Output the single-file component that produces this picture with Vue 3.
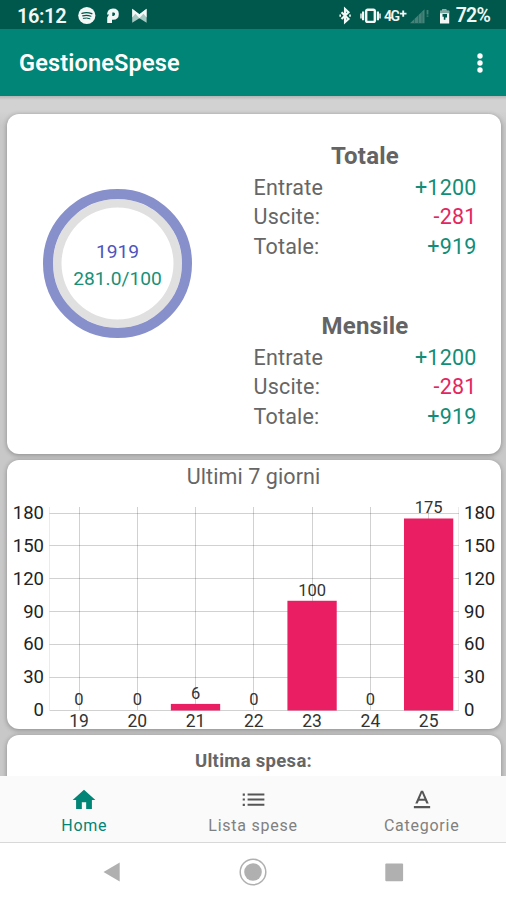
<script setup>
const summaries = [
  { title: 'Totale', rows: [['Entrate', '+1200'], ['Uscite:', '-281'], ['Totale:', '+919']] },
  { title: 'Mensile', rows: [['Entrate', '+1200'], ['Uscite:', '-281'], ['Totale:', '+919']] },
]

const ticks = [180, 150, 120, 90, 60, 30, 0]
const days = [
  { day: 19, value: 0 },
  { day: 20, value: 0 },
  { day: 21, value: 6 },
  { day: 22, value: 0 },
  { day: 23, value: 100 },
  { day: 24, value: 0 },
  { day: 25, value: 175 },
]
const yOf = (v) => 250 - v * 1.0972
const xOf = (i) => 72 + i * 58.28
</script>

<template>
  <div class="screen">
    <header class="status">
      <span class="clock">16:12</span>
      <svg class="notifs" width="69" height="20" viewBox="0 0 69 20">
        <circle cx="8.8" cy="9.5" r="8.600" fill="#f3f7f6" />
        <g fill="none" stroke="#00574b" stroke-linecap="round">
          <path d="M4 7.300q5-1.500 9.800.4" stroke-width="1.400" />
          <path d="M4.700 9.900q4.300-1.200 8.200.4" stroke-width="1.100" />
          <path d="M5.300 12.300q3.500-.8 6.600.4" stroke-width="1" />
        </g>
        <path d="M29 8.500Q29.500 2.500 35 2.500Q40.800 2.500 40.800 8Q40.800 13.800 35 13.800H34V17H29.200V11.500L31 8.500z" fill="#f3f7f6" />
        <path d="M34.300 6.400h1.400q1.500 0 1.400 1.600t-1.600 1.900h-1.200z" fill="#00574b" />
        <path d="M54.200 2.700l7.200 5.600 7.200-5.600v14l-7.200-4.400-7.200 4.400z" fill="#a3c9c2" />
        <path d="M54.200 2.700l7.200 5.600 7.200-5.600v8.800l-3.200-3.700-4 4.500-4-4.500-3.200 3.700z" fill="#f3f7f6" />
      </svg>
      <span class="spacer"></span>
      <svg class="radios" width="116" height="20" viewBox="0 0 116 20">
        <path d="M3.500 6.200l7 6.700-3.500 3.200V3l3.500 3.200-7 6.700M1.400 9.600h1.600M11.200 9.600h1.600" fill="none" stroke="#f3f7f6" stroke-width="2.100" />
        <rect x="28.200" y="3.700" width="8.600" height="12.200" rx="1.400" fill="none" stroke="#f3f7f6" stroke-width="2.400" />
        <path d="M25.100 5.600v8.600M39.900 5.600v8.600" stroke="#f3f7f6" stroke-width="2.200" />
        <path d="M23 7.400v5M42 7.400v5" stroke="#b7d0cc" stroke-width="1.900" />
        <text x="46" y="14.700" class="net" textLength="16">4G</text>
        <path d="M62 7.600h6.500M65.200 4.400v6.400" stroke="#f3f7f6" stroke-width="1.900" />
        <path d="M72 17.300L86.500 3.300v14z" fill="#478279" />
        <path d="M76.500 13v5M80.500 9v9M84 6v12" stroke="#18665b" stroke-width=".7" />
        <path d="M89.500 4v4.500M89.500 9.500v1.200" stroke="#478279" stroke-width="1.800" />
        <path d="M102 4.800h2.300V3.200h4v1.600h2.900v12.800h-9.200z" fill="#f3f7f6" />
        <path d="M102 4.800h2.300V3.200h4v1.600h2.900v2.400h-9.200z" fill="#81a9a2" />
        <path d="M104.500 8h4.500v3.600h-1.600v2.200h-1.600v-3h-1.300z" fill="#00574b" />
      </svg>
      <span class="battery">72%</span>
    </header>

    <div class="appbar">
      <h1>GestioneSpese</h1>
      <svg width="10" height="24" viewBox="0 0 10 24" fill="#fff">
        <circle cx="5" cy="5" r="2.700" /><circle cx="5" cy="12" r="2.700" /><circle cx="5" cy="19" r="2.700" />
      </svg>
    </div>

    <main>
      <section class="card overview">
        <div class="gauge">
          <div class="dial">
            <span class="total">1919</span>
            <span class="ratio">281.0/100</span>
          </div>
        </div>
        <div class="sums">
          <div v-for="s in summaries" :key="s.title" class="sum">
            <h2>{{ s.title }}</h2>
            <div v-for="[label, amount] in s.rows" :key="label" class="row">
              <span>{{ label }}</span>
              <span :class="amount.startsWith('-') ? 'neg' : 'pos'">{{ amount }}</span>
            </div>
          </div>
        </div>
      </section>

      <section class="card week">
        <h3>Ultimi 7 giorni</h3>
        <svg class="chart" width="494" height="236" viewBox="0 32 494 236">
          <g stroke="#000" stroke-opacity=".18" stroke-width="1">
            <path v-for="t in ticks" :key="t" :d="`M42.5 ${Math.round(yOf(t)) + 0.5}H452`" />
            <path v-for="(d, i) in days" :key="d.day" :d="`M${Math.floor(xOf(i)) + 0.5} 47V250`" />
            <path d="M42.5 47V250M451.5 47V250" stroke-opacity=".08" />
          </g>
          <g v-for="t in ticks" :key="t" class="tick">
            <text x="37" :y="yOf(t) + 6.3" text-anchor="end">{{ t }}</text>
            <text x="457" :y="yOf(t) + 6.3">{{ t }}</text>
          </g>
          <g v-for="(d, i) in days" :key="d.day" text-anchor="middle">
            <rect v-if="d.value" :x="xOf(i) - 24.7" :y="yOf(d.value) + 0.5" width="49.3" :height="250 - yOf(d.value)" fill="#e91e63" />
            <text class="value" :x="xOf(i)" :y="yOf(d.value) - 4.7">{{ d.value }}</text>
            <text class="day" :x="xOf(i)" y="266.5">{{ d.day }}</text>
          </g>
        </svg>
      </section>

      <section class="card last">
        <h4>Ultima spesa:</h4>
      </section>
    </main>

    <nav class="tabs">
      <a class="active">
        <svg width="26" height="26" viewBox="0 0 24 24" fill="currentColor"><path d="M10 20.200v-6.200h4v6.200h5.300v-8.200h3.200L12 2.500 1.500 12h3.200v8.200z" /></svg>
        <span>Home</span>
      </a>
      <a>
        <svg width="26" height="26" viewBox="0 0 24 24" fill="#555"><path d="M2.500 6h2v2h-2zM2.500 10.500h2v2h-2zM2.500 15.500h2v2h-2zM7 6h15.500v1.800H7zM7 10.700h15.500v1.800H7zM7 15.500h15.500v1.800H7z" /></svg>
        <span>Lista spese</span>
      </a>
      <a>
        <svg width="26" height="26" viewBox="0 0 24 24" fill="#555"><path d="M4.500 17.500v2h15v-2h-15zm4.600-4.900h5.800l1.100 2.700h2.200L13 3.500h-2L5.800 15.300H8l1.100-2.700zM12 5.600l2.200 5.300H9.800L12 5.600z" /></svg>
        <span>Categorie</span>
      </a>
    </nav>

    <footer class="sysnav">
      <svg width="30" height="30" viewBox="0 0 30 30"><path d="M6.500 15L22.700 5.500v19z" fill="#b0b0b0" /></svg>
      <svg width="30" height="30" viewBox="0 0 30 30"><circle cx="15" cy="15" r="12.800" fill="none" stroke="#b0b0b0" stroke-width="1.500" /><circle cx="15" cy="15" r="8.800" fill="#b0b0b0" /></svg>
      <svg width="30" height="30" viewBox="0 0 30 30"><rect x="6.300" y="6.500" width="17.800" height="17.800" rx="1" fill="#b0b0b0" /></svg>
    </footer>
  </div>
</template>

<style>
body { margin: 0; }
</style>

<style scoped>
.screen {
  width: 506px;
  height: 900px;
  overflow: hidden;
  display: flex;
  flex-direction: column;
  background: #fff;
  font-family: Roboto, "Liberation Sans", sans-serif;
}
h1, h2, h3, h4 { margin: 0; }
svg { display: block; flex: none; }
.status {
  flex: none;
  box-sizing: border-box;
  height: 29px;
  padding: 2px 16px 0 17px;
  display: flex;
  align-items: center;
  background: #00574b;
  color: #f3f7f6;
  font-size: 20px;
  font-weight: 600;
}
.clock { width: 61px; letter-spacing: -0.4px; }
.spacer { flex: 1; }
.battery { margin-left: 2px; font-size: 19.5px; letter-spacing: -0.8px; }
.net { font-size: 14px; font-weight: 600; fill: #f3f7f6; }
.appbar {
  flex: none;
  box-sizing: border-box;
  height: 67px;
  padding: 0 21px 0 19px;
  display: flex;
  align-items: center;
  justify-content: space-between;
  background: #008577;
  color: #fff;
}
h1 { font-size: 23.5px; font-weight: 600; padding-top: 1px; letter-spacing: .15px; }
main {
  flex: 1;
  min-height: 0;
  overflow: hidden;
  padding: 18px 5.5px 0 6.5px;
  display: flex;
  flex-direction: column;
  gap: 6px;
  background: linear-gradient(#b4b4b4, #d2d2d2 4px, #d2d2d2 15px, #c8c8c8 30px, #c8c8c8);
}
.card {
  flex: none;
  box-sizing: border-box;
  background: #fff;
  border-radius: 12px;
  box-shadow: 0 1px 5px rgba(0, 0, 0, .32);
  color: #666;
}
.overview { height: 340px; display: flex; }
.gauge { width: 222px; padding-top: 75px; display: flex; justify-content: center; align-items: flex-start; }
.dial {
  box-sizing: border-box;
  width: 149px;
  height: 149px;
  padding-top: 2px;
  border: 10px solid #8790ca;
  border-radius: 50%;
  box-shadow: inset 0 0 0 8.5px #e0e0e0;
  display: flex;
  flex-direction: column;
  align-items: center;
  justify-content: center;
  font-size: 19.2px;
  line-height: 27px;
}
.total { color: #4c55bd; }
.ratio { color: #189078; }
.sums { flex: 1; padding: 27px 24px 0 25px; }
.sum { height: 170px; }
h2 { font-size: 24px; line-height: 31.5px; font-weight: 700; text-align: center; color: #646464; letter-spacing: .2px; }
.row { display: flex; justify-content: space-between; font-size: 21.5px; line-height: 29.6px; letter-spacing: .2px; }
.pos { color: #128d78; }
.neg { color: #e3265f; }
.week { height: 268.5px; }
h3 { height: 32px; line-height: 33px; font-size: 21.5px; font-weight: 400; text-align: center; letter-spacing: .1px; }
.chart { overflow: visible; }
.tick { font-size: 18.5px; fill: #222; }
.value { font-size: 16.5px; fill: #333; }
.day { font-size: 17.5px; fill: #333; }
.last { height: 120px; padding-top: 14px; }
h4 { font-size: 18.5px; line-height: 24px; text-align: center; font-weight: 700; letter-spacing: .3px; }
.tabs {
  flex: none;
  box-sizing: border-box;
  height: 67px;
  display: flex;
  background: #fafafa;
  border-bottom: 1px solid #d8d8d8;
  color: #808080;
}
.tabs a {
  flex: 1;
  display: flex;
  flex-direction: column;
  align-items: center;
  padding-top: 11px;
  font-size: 16px;
  line-height: 26px;
  letter-spacing: .75px;
}
.tabs .active { color: #008577; }
.sysnav { flex: none; height: 57px; display: flex; justify-content: center; align-items: center; gap: 111px; }
</style>
